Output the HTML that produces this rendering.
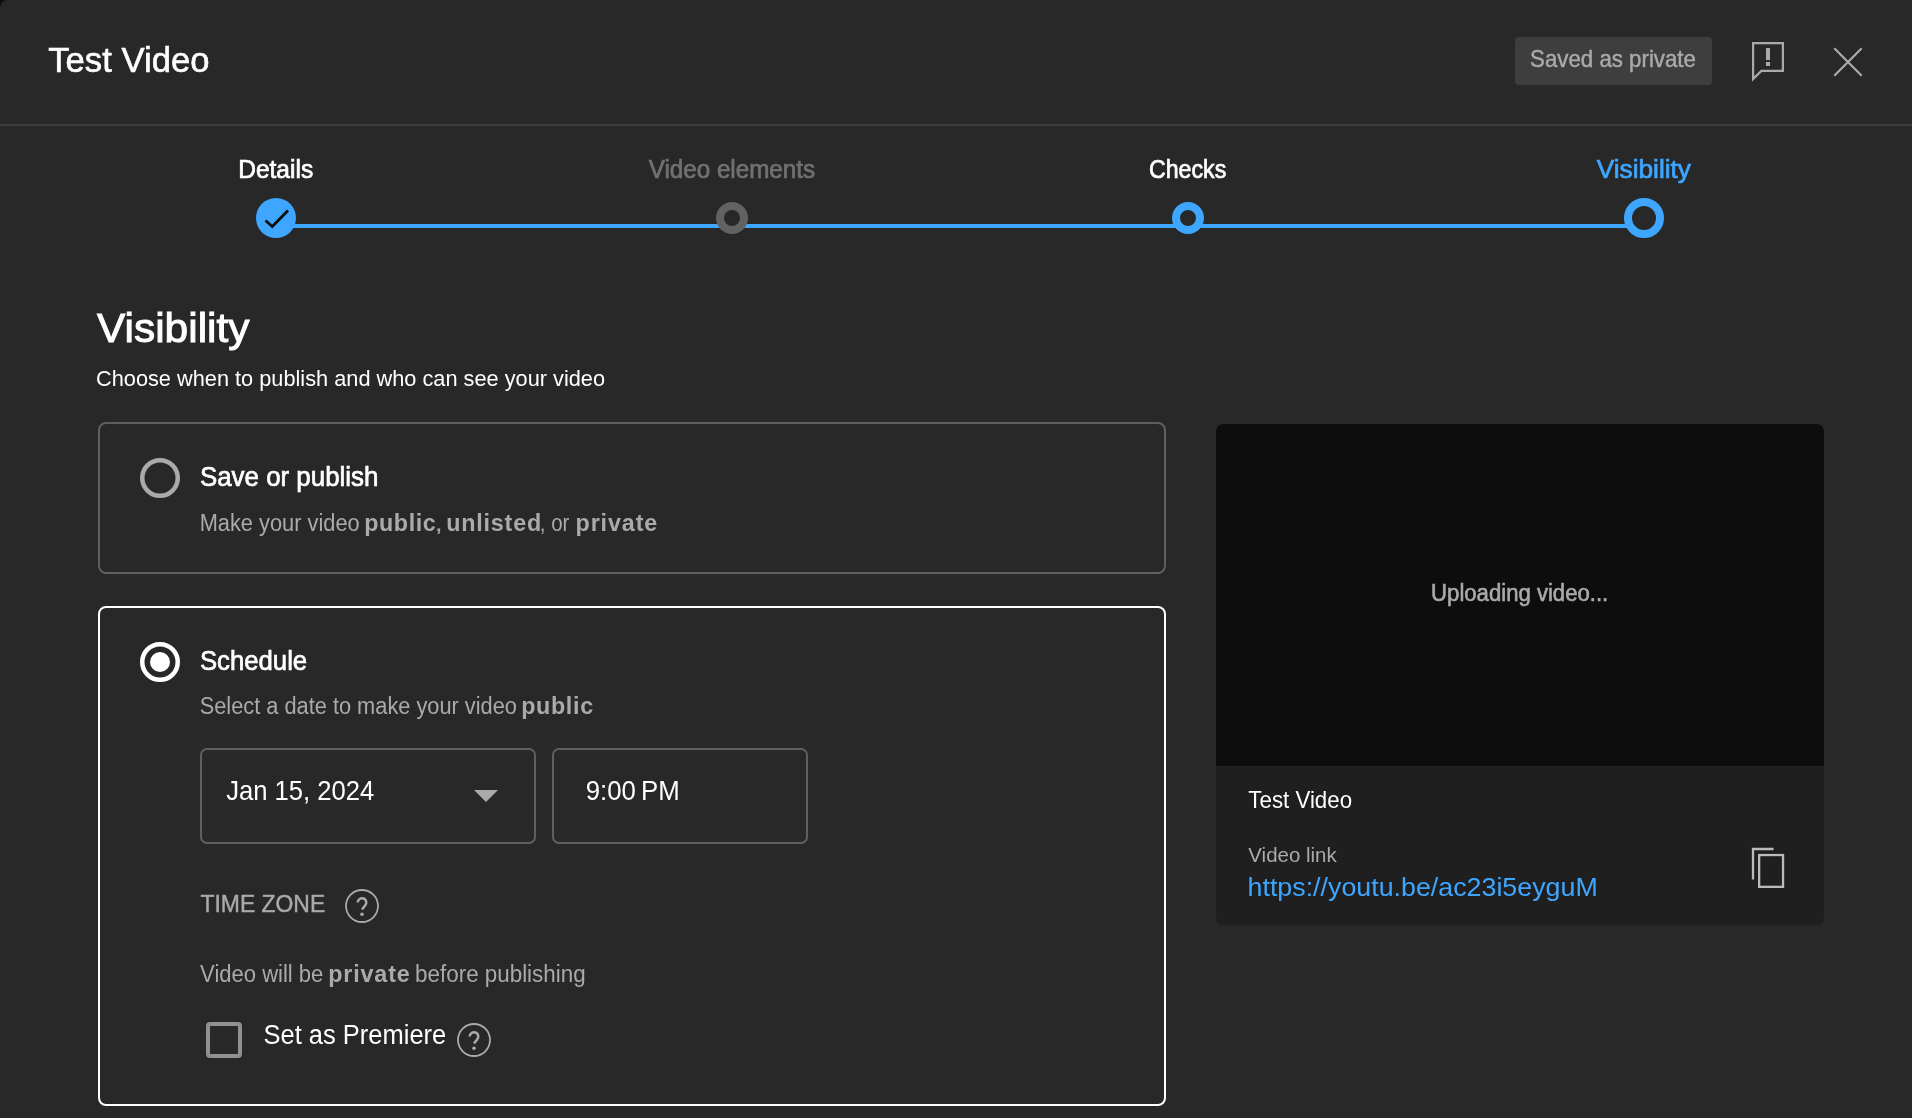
<!DOCTYPE html>
<html><head><meta charset="utf-8"><style>
html,body{margin:0;padding:0;background:#282828;overflow:hidden}
svg{display:block;will-change:transform;font-family:"Liberation Sans",sans-serif}
</style></head><body>
<svg width="1912" height="1118" viewBox="0 0 1912 1118">

<rect x="0" y="0" width="1912" height="1118" fill="#282828"/>
<path d="M0 0 H7 A7 9 0 0 0 0 9 Z" fill="#0f0f0f"/>
<rect x="0" y="124" width="1912" height="2" fill="#3d3d3d"/>
<rect x="1515" y="37" width="197" height="48" rx="4" fill="#3e3e3e"/>
<!-- feedback icon -->
<path d="M1753.1 43.1 H1782.9 V70.9 H1761.3 L1753.1 79.1 Z" fill="none" stroke="#aaaaaa" stroke-width="2.2" stroke-linejoin="miter"/>
<rect x="1766" y="48" width="4" height="12" fill="#aaaaaa"/>
<rect x="1766" y="62" width="4" height="4" fill="#aaaaaa"/>
<!-- close -->
<path d="M1834.3 48.3 L1861.7 75.7 M1861.7 48.3 L1834.3 75.7" stroke="#aaaaaa" stroke-width="2.2" fill="none"/>
<!-- stepper -->
<rect x="276" y="224" width="1368" height="4" fill="#3ea6ff"/>
<circle cx="276" cy="218" r="20" fill="#3ea6ff"/>
<path d="M265.5 220.5 L272.3 226.5 L288 210.5" stroke="#0f0f0f" stroke-width="2.8" fill="none"/>
<circle cx="732" cy="218" r="12" fill="#282828" stroke="#626262" stroke-width="8"/>
<circle cx="1188" cy="218" r="12" fill="#282828" stroke="#3ea6ff" stroke-width="8"/>
<circle cx="1644" cy="218" r="16" fill="#282828" stroke="#3ea6ff" stroke-width="8"/>
<!-- card 1 -->
<rect x="99" y="423" width="1066" height="150" rx="7" fill="none" stroke="#5f5f5f" stroke-width="2"/>
<circle cx="160" cy="478" r="17.75" fill="none" stroke="#aaaaaa" stroke-width="4.5"/>
<!-- card 2 -->
<rect x="99" y="607" width="1066" height="498" rx="7" fill="none" stroke="#ffffff" stroke-width="2"/>
<circle cx="160" cy="662" r="17.75" fill="none" stroke="#ffffff" stroke-width="4.5"/>
<circle cx="160" cy="662" r="10" fill="#ffffff"/>
<rect x="201" y="749" width="334" height="94" rx="6" fill="none" stroke="#5f5f5f" stroke-width="2"/>
<path d="M474 790 H498 L486 802 Z" fill="#aaaaaa"/>
<rect x="553" y="749" width="254" height="94" rx="6" fill="none" stroke="#5f5f5f" stroke-width="2"/>
<rect x="208" y="1024" width="32" height="32" rx="2" fill="none" stroke="#909090" stroke-width="4"/>
<!-- preview panel -->
<rect x="1216" y="424" width="608" height="501.5" rx="8" fill="#1f1f1f"/>
<path d="M1216 766 V432 A8 8 0 0 1 1224 424 H1816 A8 8 0 0 1 1824 432 V766 Z" fill="#0d0d0d"/>
<!-- copy icon -->
<path d="M1773.5 849 H1753 V879.5" stroke="#bbbbbb" stroke-width="2.3" fill="none"/>
<rect x="1759.15" y="855.05" width="23.9" height="31.8" fill="none" stroke="#bbbbbb" stroke-width="2.3"/>


<g id="help1" transform="translate(362 906)"><circle cx="0" cy="0" r="16" fill="none" stroke="#aaaaaa" stroke-width="1.8"/>
<path d="M-4.3 -3.5 A4.3 4.3 0 1 1 3.04 -0.46 L0 3.5" fill="none" stroke="#aaaaaa" stroke-width="2.5"/>
<circle cx="0" cy="8.3" r="1.8" fill="#aaaaaa"/></g>
<g id="help2" transform="translate(474 1040)"><circle cx="0" cy="0" r="16" fill="none" stroke="#aaaaaa" stroke-width="1.8"/>
<path d="M-4.3 -3.5 A4.3 4.3 0 1 1 3.04 -0.46 L0 3.5" fill="none" stroke="#aaaaaa" stroke-width="2.5"/>
<circle cx="0" cy="8.3" r="1.8" fill="#aaaaaa"/></g>

<text id="title" x="48.24" y="72.1" font-size="35.3" font-weight="400" fill="#ffffff" stroke="#ffffff" stroke-width="0.6" textLength="161.29" lengthAdjust="spacingAndGlyphs">Test Video</text>
<text id="saved" x="1530.11" y="67.4" font-size="23.8" font-weight="400" fill="#aaaaaa" stroke="#aaaaaa" stroke-width="0.45" textLength="165.79" lengthAdjust="spacingAndGlyphs">Saved as private</text>
<text id="s1" x="238.23" y="178" font-size="25.3" font-weight="400" fill="#ffffff" stroke="#ffffff" stroke-width="0.7" textLength="74.93" lengthAdjust="spacingAndGlyphs">Details</text>
<text id="s2" x="648.68" y="178" font-size="25.3" font-weight="400" fill="#717171" stroke="#717171" stroke-width="0.7" textLength="166.44" lengthAdjust="spacingAndGlyphs">Video elements</text>
<text id="s3" x="1149.01" y="178" font-size="25.3" font-weight="400" fill="#ffffff" stroke="#ffffff" stroke-width="0.7" textLength="77.25" lengthAdjust="spacingAndGlyphs">Checks</text>
<text id="s4" x="1596.67" y="177.9" font-size="25.3" font-weight="400" fill="#3ea6ff" stroke="#3ea6ff" stroke-width="0.7" textLength="94.31" lengthAdjust="spacingAndGlyphs">Visibility</text>
<text id="h1" x="97.02" y="342.4" font-size="41.5" font-weight="400" fill="#ffffff" stroke="#ffffff" stroke-width="1.0" textLength="152.47" lengthAdjust="spacingAndGlyphs">Visibility</text>
<text id="sub" x="96.00" y="385.9" font-size="22.8" font-weight="400" fill="#ffffff" textLength="509.05" lengthAdjust="spacingAndGlyphs">Choose when to publish and who can see your video</text>
<text id="sp" x="199.93" y="486.4" font-size="27.8" font-weight="400" fill="#ffffff" stroke="#ffffff" stroke-width="0.7" textLength="178.51" lengthAdjust="spacingAndGlyphs">Save or publish</text>
<text id="mk1" x="199.63" y="530.6" font-size="23.3" font-weight="400" fill="#aaaaaa" textLength="160.13" lengthAdjust="spacingAndGlyphs">Make your video</text>
<text id="mk2" x="364.20" y="530.6" font-size="23.3" font-weight="700" fill="#aaaaaa" textLength="71.57" lengthAdjust="spacing">public</text>
<text id="mk3" x="434.52" y="530.6" font-size="23.3" font-weight="400" fill="#aaaaaa" textLength="8.42" lengthAdjust="spacingAndGlyphs">,</text>
<text id="mk4" x="446.32" y="530.6" font-size="23.3" font-weight="700" fill="#aaaaaa" textLength="94.80" lengthAdjust="spacing">unlisted</text>
<text id="mk5" x="539.82" y="530.6" font-size="23.3" font-weight="400" fill="#aaaaaa" textLength="29.61" lengthAdjust="spacingAndGlyphs">, or</text>
<text id="mk6" x="575.55" y="530.6" font-size="23.3" font-weight="700" fill="#aaaaaa" textLength="81.73" lengthAdjust="spacing">private</text>
<text id="sch" x="199.97" y="670.1" font-size="27.8" font-weight="400" fill="#ffffff" stroke="#ffffff" stroke-width="0.7" textLength="107.20" lengthAdjust="spacingAndGlyphs">Schedule</text>
<text id="sel1" x="199.72" y="713.7" font-size="23.3" font-weight="400" fill="#aaaaaa" textLength="317.20" lengthAdjust="spacingAndGlyphs">Select a date to make your video</text>
<text id="sel2" x="521.13" y="713.7" font-size="23.3" font-weight="700" fill="#aaaaaa" textLength="72.02" lengthAdjust="spacing">public</text>
<text id="date" x="226.17" y="800.4" font-size="28.5" font-weight="400" fill="#ffffff" textLength="148.19" lengthAdjust="spacingAndGlyphs">Jan 15, 2024</text>
<text id="time" x="585.77" y="799.8" font-size="28.5" font-weight="400" fill="#ffffff" textLength="93.98" lengthAdjust="spacingAndGlyphs">9:00 PM</text>
<text id="tz" x="200.42" y="911.9" font-size="24.7" font-weight="400" fill="#aaaaaa" stroke="#aaaaaa" stroke-width="0.45" textLength="124.82" lengthAdjust="spacingAndGlyphs">TIME ZONE</text>
<text id="vw1" x="200.10" y="982.2" font-size="23.3" font-weight="400" fill="#aaaaaa" textLength="123.22" lengthAdjust="spacingAndGlyphs">Video will be</text>
<text id="vw2" x="328.17" y="982.2" font-size="23.3" font-weight="700" fill="#aaaaaa" textLength="81.60" lengthAdjust="spacing">private</text>
<text id="vw3" x="415.11" y="982.2" font-size="23.3" font-weight="400" fill="#aaaaaa" textLength="170.49" lengthAdjust="spacingAndGlyphs">before publishing</text>
<text id="prem" x="263.49" y="1044" font-size="27" font-weight="400" fill="#ffffff" textLength="182.81" lengthAdjust="spacingAndGlyphs">Set as Premiere</text>
<text id="upl" x="1431.12" y="601" font-size="23.3" font-weight="400" fill="#aaaaaa" stroke="#aaaaaa" stroke-width="0.6" textLength="177.12" lengthAdjust="spacingAndGlyphs">Uploading video...</text>
<text id="ptitle" x="1248.35" y="807.9" font-size="23.7" font-weight="400" fill="#ffffff" textLength="103.69" lengthAdjust="spacingAndGlyphs">Test Video</text>
<text id="vlink" x="1248.34" y="862" font-size="19.5" font-weight="400" fill="#aaaaaa" textLength="88.37" lengthAdjust="spacingAndGlyphs">Video link</text>
<text id="link" x="1247.55" y="895.7" font-size="26.5" font-weight="400" fill="#3ea6ff" textLength="350.20" lengthAdjust="spacingAndGlyphs">https://youtu.be/ac23i5eyguM</text>
</svg>
</body></html>
